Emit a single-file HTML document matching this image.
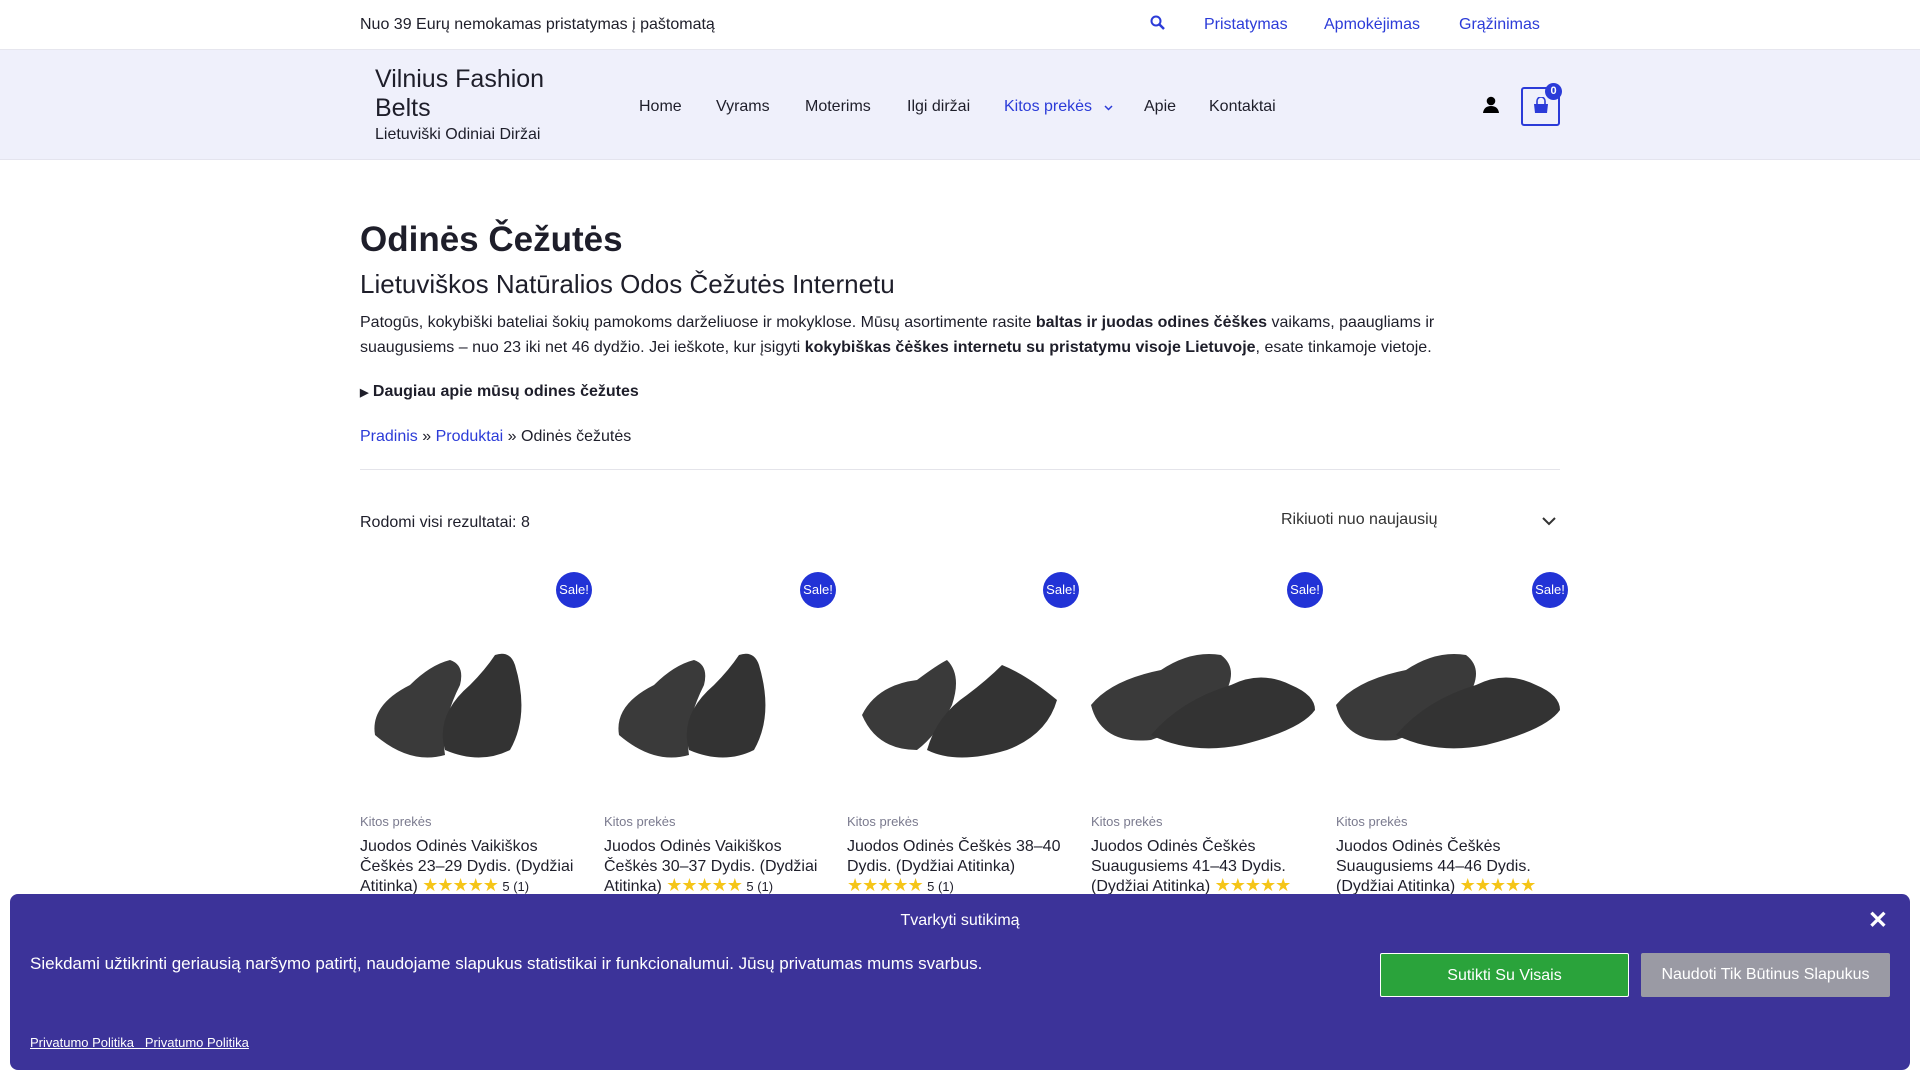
<!DOCTYPE html>
<html><head><meta charset="utf-8"><style>
*{margin:0;padding:0;box-sizing:border-box}
body{width:1920px;height:1080px;overflow:hidden;font-family:"Liberation Sans",sans-serif;color:#1e1e2a;background:#fff;position:relative}
a{color:#2b3bd8;text-decoration:none}
.top{height:50px;border-bottom:1px solid #e6e6ee;position:relative;font-size:16px}
.top .l{position:absolute;left:360px;top:16px}
.top .r{position:absolute;top:16px;color:#2b3bd8}
.hdr{height:110px;background:#eff0fb;position:relative;border-bottom:1px solid #e4e4ee}
.title{position:absolute;left:375px;top:15px;font-size:25px;line-height:29px;width:200px}
.tag{position:absolute;left:375px;top:76px;font-size:16px}
.nav{position:absolute;top:48px;font-size:16px}
.cart{position:absolute;left:1521px;top:37px;width:39px;height:39px;border:2px solid #2b3bd8;border-radius:3px}
.badge{position:absolute;left:1545px;top:33px;width:17px;height:17px;border-radius:50%;background:#2b3bd8;color:#fff;font-size:11px;font-weight:bold;text-align:center;line-height:17px}
h1{position:absolute;left:360px;top:220px;font-size:35px;font-weight:bold}
h2{position:absolute;left:360px;top:269px;font-size:26px;font-weight:normal}
.p{position:absolute;left:360px;top:310px;width:1140px;font-size:16px;line-height:25px}
.det{position:absolute;left:360px;top:383px;font-size:16px;font-weight:bold}
.bc{position:absolute;left:360px;top:428px;font-size:16px}
.hr{position:absolute;left:360px;top:469px;width:1200px;height:1px;background:#e4e4ea}
.cnt{position:absolute;left:360px;top:514px;font-size:16px}
.sort{position:absolute;left:1281px;top:511px;font-size:16px;color:#333;width:275px}
.prod{position:absolute;top:570px;width:224px}
.sale{position:absolute;right:-8px;top:2px;width:36px;height:36px;border-radius:50%;background:#2233d6;color:#fff;font-size:13px;text-align:center;line-height:36px}
.cat{position:absolute;top:244px;font-size:13px;color:#7a7a8e}
.pt{position:absolute;top:267px;font-size:16px;line-height:19.5px;width:230px}
.st{color:#f5c518;letter-spacing:-1px;font-size:18px}
.ck{position:absolute;left:10px;top:894px;width:1900px;height:176px;background:#3c3399;border-radius:8px;color:#fff}
.btn{position:absolute;top:59px;width:249px;height:44px;color:#fff;font-size:16px;text-align:center;line-height:44px;border-radius:2px}
</style></head><body>
<div class="top"><span class="l">Nuo 39 Eurų nemokamas pristatymas į paštomatą</span>
<svg style="position:absolute;left:1150px;top:15px" width="16" height="16" viewBox="0 0 16 16"><circle cx="6" cy="6" r="4.5" fill="none" stroke="#2b3bd8" stroke-width="2"/><path d="M9.5 9.5L14 14" stroke="#2b3bd8" stroke-width="2.5"/></svg>
<span class="r" style="left:1204px">Pristatymas</span><span class="r" style="left:1324px">Apmokėjimas</span><span class="r" style="left:1459px">Grąžinimas</span></div>
<div class="hdr"><div class="title">Vilnius Fashion Belts</div><div class="tag">Lietuviški Odiniai Diržai</div>
<span class="nav" style="left:639px">Home</span><span class="nav" style="left:716px">Vyrams</span><span class="nav" style="left:805px">Moterims</span><span class="nav" style="left:907px">Ilgi diržai</span><span class="nav" style="left:1004px;color:#2b3bd8">Kitos prekės</span><svg style="position:absolute;left:1104px;top:55px" width="9" height="6" viewBox="0 0 9 6"><path d="M1 1l3.5 3.5L8 1" fill="none" stroke="#2b3bd8" stroke-width="1.5"/></svg><span class="nav" style="left:1144px">Apie</span><span class="nav" style="left:1209px">Kontaktai</span>
<svg style="position:absolute;left:1482px;top:46px" width="18" height="18" viewBox="0 0 18 18"><circle cx="9" cy="5" r="4.3"/><path d="M1 17Q2 10 9 10Q16 10 17 17Z"/></svg>
<div class="cart"><svg style="position:absolute;left:9px;top:8px" width="18" height="18" viewBox="0 0 18 18"><path d="M5 7V4a4 4 0 0 1 8 0v3" fill="none" stroke="#2b3bd8" stroke-width="1.6"/><path d="M2 7h14l-1 9H3z" fill="#2b3bd8"/></svg></div><div class="badge">0</div></div>
<h1>Odinės Čežutės</h1>
<h2>Lietuviškos Natūralios Odos Čežutės Internetu</h2>
<div class="p">Patogūs, kokybiški bateliai šokių pamokoms darželiuose ir mokyklose. Mūsų asortimente rasite <b>baltas ir juodas odines čėškes</b> vaikams, paaugliams ir suaugusiems – nuo 23 iki net 46 dydžio. Jei ieškote, kur įsigyti <b>kokybiškas čėškes internetu su pristatymu visoje Lietuvoje</b>, esate tinkamoje vietoje.</div>
<div class="det"><span style="font-size:11px">▶</span> Daugiau apie mūsų odines čežutes</div>
<div class="bc"><a>Pradinis</a> » <a>Produktai</a> » Odinės čežutės</div>
<div class="hr"></div>
<div class="cnt">Rodomi visi rezultatai: 8</div>
<div class="sort">Rikiuoti nuo naujausių<svg style="position:absolute;right:0;top:6px" width="14" height="9" viewBox="0 0 14 9"><path d="M1 1l6 6 6-6" fill="none" stroke="#333" stroke-width="2"/></svg></div>

<div class="prod" style="left:360px"><div class="sale">Sale!</div>
<svg style="position:absolute;left:10px;top:55px" width="200" height="140" viewBox="0 0 200 140"><path d="M5 110Q0 80 40 60Q60 40 80 35Q95 40 90 60Q70 100 75 130Q40 140 5 110Z" fill="#3a3a3a"/><path d="M75 125Q65 90 100 60Q115 45 125 30Q140 25 145 40Q160 90 140 125Q110 140 75 125Z" fill="#333"/></svg>
<div class="cat">Kitos prekės</div><div class="pt">Juodos Odinės Vaikiškos Češkės 23–29 Dydis. (Dydžiai Atitinka) <span class="st">★★★★★</span> <span style="font-size:13px">5 (1)</span></div></div>
<div class="prod" style="left:604px"><div class="sale">Sale!</div>
<svg style="position:absolute;left:10px;top:55px" width="200" height="140" viewBox="0 0 200 140"><path d="M5 110Q0 80 40 60Q60 40 80 35Q95 40 90 60Q70 100 75 130Q40 140 5 110Z" fill="#3a3a3a"/><path d="M75 125Q65 90 100 60Q115 45 125 30Q140 25 145 40Q160 90 140 125Q110 140 75 125Z" fill="#333"/></svg>
<div class="cat">Kitos prekės</div><div class="pt">Juodos Odinės Vaikiškos Češkės 30–37 Dydis. (Dydžiai Atitinka) <span class="st">★★★★★</span> <span style="font-size:13px">5 (1)</span></div></div>
<div class="prod" style="left:847px"><div class="sale">Sale!</div>
<svg style="position:absolute;left:10px;top:55px" width="210" height="140" viewBox="0 0 210 140"><path d="M5 90Q20 60 60 55Q80 40 90 35Q105 50 95 80Q80 110 60 125Q20 125 5 90Z" fill="#3a3a3a"/><path d="M70 125Q80 90 110 70Q130 55 145 40Q170 50 200 75Q190 110 150 125Q100 140 70 125Z" fill="#333"/></svg>
<div class="cat">Kitos prekės</div><div class="pt" style="width:224px">Juodos Odinės Češkės 38–40 Dydis. (Dydžiai Atitinka) <span class="st">★★★★★</span> <span style="font-size:13px">5 (1)</span></div></div>
<div class="prod" style="left:1091px"><div class="sale">Sale!</div>
<svg style="position:absolute;left:0;top:60px" width="224" height="130" viewBox="0 0 224 130"><path d="M0 75Q20 50 70 40Q100 20 130 25Q150 40 130 70Q90 100 60 110Q10 115 0 75Z" fill="#3a3a3a"/><path d="M60 105Q90 70 140 55Q170 40 200 55Q224 65 224 80Q210 100 150 115Q100 125 60 105Z" fill="#333"/></svg>
<div class="cat">Kitos prekės</div><div class="pt">Juodos Odinės Češkės Suaugusiems 41–43 Dydis. (Dydžiai Atitinka) <span class="st">★★★★★</span></div></div>
<div class="prod" style="left:1336px"><div class="sale">Sale!</div>
<svg style="position:absolute;left:0;top:60px" width="224" height="130" viewBox="0 0 224 130"><path d="M0 75Q20 50 70 40Q100 20 130 25Q150 40 130 70Q90 100 60 110Q10 115 0 75Z" fill="#3a3a3a"/><path d="M60 105Q90 70 140 55Q170 40 200 55Q224 65 224 80Q210 100 150 115Q100 125 60 105Z" fill="#333"/></svg>
<div class="cat">Kitos prekės</div><div class="pt">Juodos Odinės Češkės Suaugusiems 44–46 Dydis. (Dydžiai Atitinka) <span class="st">★★★★★</span></div></div>

<div class="ck">
<div style="position:absolute;left:0;width:1900px;top:18px;text-align:center;font-size:16px">Tvarkyti sutikimą</div>
<div style="position:absolute;right:22px;top:12px;font-size:24px;font-weight:bold">✕</div>
<div style="position:absolute;left:20px;top:60px;font-size:17px">Siekdami užtikrinti geriausią naršymo patirtį, naudojame slapukus statistikai ir funkcionalumui. Jūsų privatumas mums svarbus.</div>
<div class="btn" style="left:1370px;background:#2aa33b;border:1px solid #fff">Sutikti Su Visais</div>
<div class="btn" style="left:1631px;background:#9a9aa4">Naudoti Tik Būtinus Slapukus</div>
<div style="position:absolute;left:20px;top:141px;font-size:13px;text-decoration:underline">Privatumo Politika &nbsp;&nbsp;Privatumo Politika</div>
</div>
</body></html>
